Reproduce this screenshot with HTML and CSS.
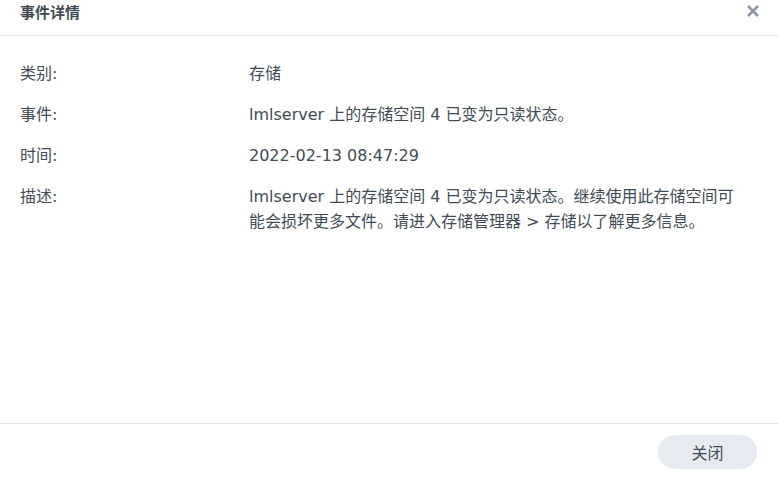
FILE: index.html
```html
<!DOCTYPE html>
<html lang="zh-CN">
<head>
    <meta charset="UTF-8">
    <meta name="viewport" content="width=device-width, initial-scale=1.0">
    <title>事件详情</title>
    <link rel="stylesheet" href="styles.css">
</head>
<body>
    <div class="dialog">
        <div class="dialog-header">
            <span class="dialog-title">事件详情</span>
            <button type="button" class="close-x" aria-label="关闭">
                <svg width="14" height="14" viewBox="0 0 14 14">
                    <path d="M2 2 L12 12 M12 2 L2 12" stroke="#8e98a3" stroke-width="2.6" stroke-linecap="butt"/>
                </svg>
            </button>
        </div>

        <div class="dialog-body">
            <div class="row">
                <div class="label">类别:</div>
                <div class="value">存储</div>
            </div>
            <div class="row">
                <div class="label">事件:</div>
                <div class="value">lmlserver 上的存储空间 4 已变为只读状态。</div>
            </div>
            <div class="row">
                <div class="label">时间:</div>
                <div class="value">2022-02-13 08:47:29</div>
            </div>
            <div class="row">
                <div class="label">描述:</div>
                <div class="value">lmlserver 上的存储空间 4 已变为只读状态。继续使用此存储空间可能会损坏更多文件。请进入存储管理器 &gt; 存储以了解更多信息。</div>
            </div>
        </div>

        <div class="dialog-footer">
            <button type="button" class="btn-close">关闭</button>
        </div>
    </div>
</body>
</html>
```

FILE: styles.css
```css
html, body {
    margin: 0;
    padding: 0;
    background: #fff;
}

body {
    font-family: "DejaVu Sans", "Noto Sans CJK SC", sans-serif;
    color: #414b55;
}

.dialog {
    width: 778px;
    height: 479px;
    display: flex;
    flex-direction: column;
}

.dialog-header {
    height: 36px;
    border-bottom: 1px solid #e6e8eb;
    display: flex;
    justify-content: space-between;
    align-items: flex-start;
    padding: 0 18px 0 20px;
    box-sizing: border-box;
}

.dialog-title {
    font-family: "Noto Sans CJK SC", sans-serif;
    font-size: 15px;
    font-weight: 600;
    line-height: 23px;
}

.close-x {
    border: none;
    background: none;
    padding: 0;
    margin-top: 4px;
    width: 14px;
    height: 14px;
    cursor: pointer;
}

.dialog-body {
    flex: 1;
    padding: 25px 20px 0 20px;
}

.row {
    display: flex;
    font-size: 16px;
    line-height: 25px;
    margin-bottom: 16px;
}

.label {
    width: 229px;
    flex-shrink: 0;
}

.value {
    max-width: 496px;
}

.dialog-footer {
    border-top: 1px solid #e3e7eb;
    height: 56px;
    box-sizing: border-box;
    display: flex;
    justify-content: flex-end;
    padding: 11px 21px 0 0;
}

.btn-close {
    width: 99px;
    height: 34px;
    border: none;
    border-radius: 17px;
    background: #e6ebf1;
    color: #414b55;
    font-family: "Noto Sans CJK SC", sans-serif;
    font-size: 16px;
    cursor: pointer;
}
```
